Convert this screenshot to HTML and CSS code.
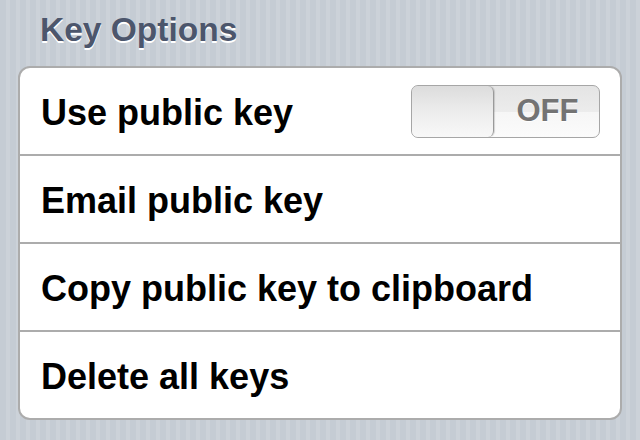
FILE: index.html
```html
<!DOCTYPE html>
<html>
<head>
<meta charset="utf-8">
<link rel="stylesheet" href="styles.css">
</head>
<body>
<div class="screen">
  <h2 class="section-title">Key Options</h2>
  <div class="group">
    <div class="row">
      <span class="label">Use public key</span>
      <div class="switch">
        <div class="knob"></div>
        <span class="state">OFF</span>
      </div>
    </div>
    <div class="row"><span class="label">Email public key</span></div>
    <div class="row"><span class="label">Copy public key to clipboard</span></div>
    <div class="row"><span class="label">Delete all keys</span></div>
  </div>
</div>
</body>
</html>
```
FILE: styles.css
```css
html, body {
  margin: 0;
  padding: 0;
}
body {
  width: 640px;
  height: 440px;
  overflow: hidden;
  font-family: "Liberation Sans", Arial, Helvetica, sans-serif;
  background-color: #c5ccd4;
  background-image: repeating-linear-gradient(90deg, #c5ccd4 0px, #c5ccd4 6px, #ccd2d9 6px, #ccd2d9 10px);
}
.screen {
  display: flex;
  flex-direction: column;
  padding: 0 18px;
}
.section-title {
  margin: 0;
  padding: 10px 0 0 22px;
  height: 66px;
  box-sizing: border-box;
  font-size: 33.5px;
  line-height: 40px;
  font-weight: bold;
  color: #4c566c;
  text-shadow: 0 2px 0 #ffffff;
}
.group {
  background: #ffffff;
  border: 2px solid #acacac;
  border-radius: 12px;
  display: flex;
  flex-direction: column;
}
.row {
  height: 86px;
  box-sizing: border-box;
  display: flex;
  align-items: center;
  justify-content: space-between;
  padding: 0 20px 0 21px;
  border-top: 2px solid #acacac;
}
.row:first-child {
  border-top: none;
  height: 86px;
}
.row + .row {
  height: 88px;
}
.label {
  font-size: 36px;
  font-weight: bold;
  color: #000000;
  padding-top: 4px;
}
.switch {
  width: 189px;
  height: 53px;
  box-sizing: border-box;
  border: 1px solid #a6a6a6;
  border-radius: 7px;
  background: linear-gradient(#e4e4e4, #ececec 50%, #f6f6f6 51%, #fbfbfb);
  display: flex;
  align-items: center;
  position: relative;
  overflow: hidden;
}
.knob {
  width: 82px;
  height: 51px;
  box-sizing: border-box;
  border-right: 1px solid #9a9a9a;
  border-radius: 6px;
  background: linear-gradient(#dcdcdc, #ebebeb 45%, #f8f8f8);
  box-shadow: 1px 0 1px rgba(0,0,0,0.15);
}
.state {
  flex: 1;
  text-align: center;
  font-size: 31px;
  font-weight: bold;
  color: #737373;
  text-shadow: 0 1px 0 #ffffff;
  padding-left: 2px;
}
```
